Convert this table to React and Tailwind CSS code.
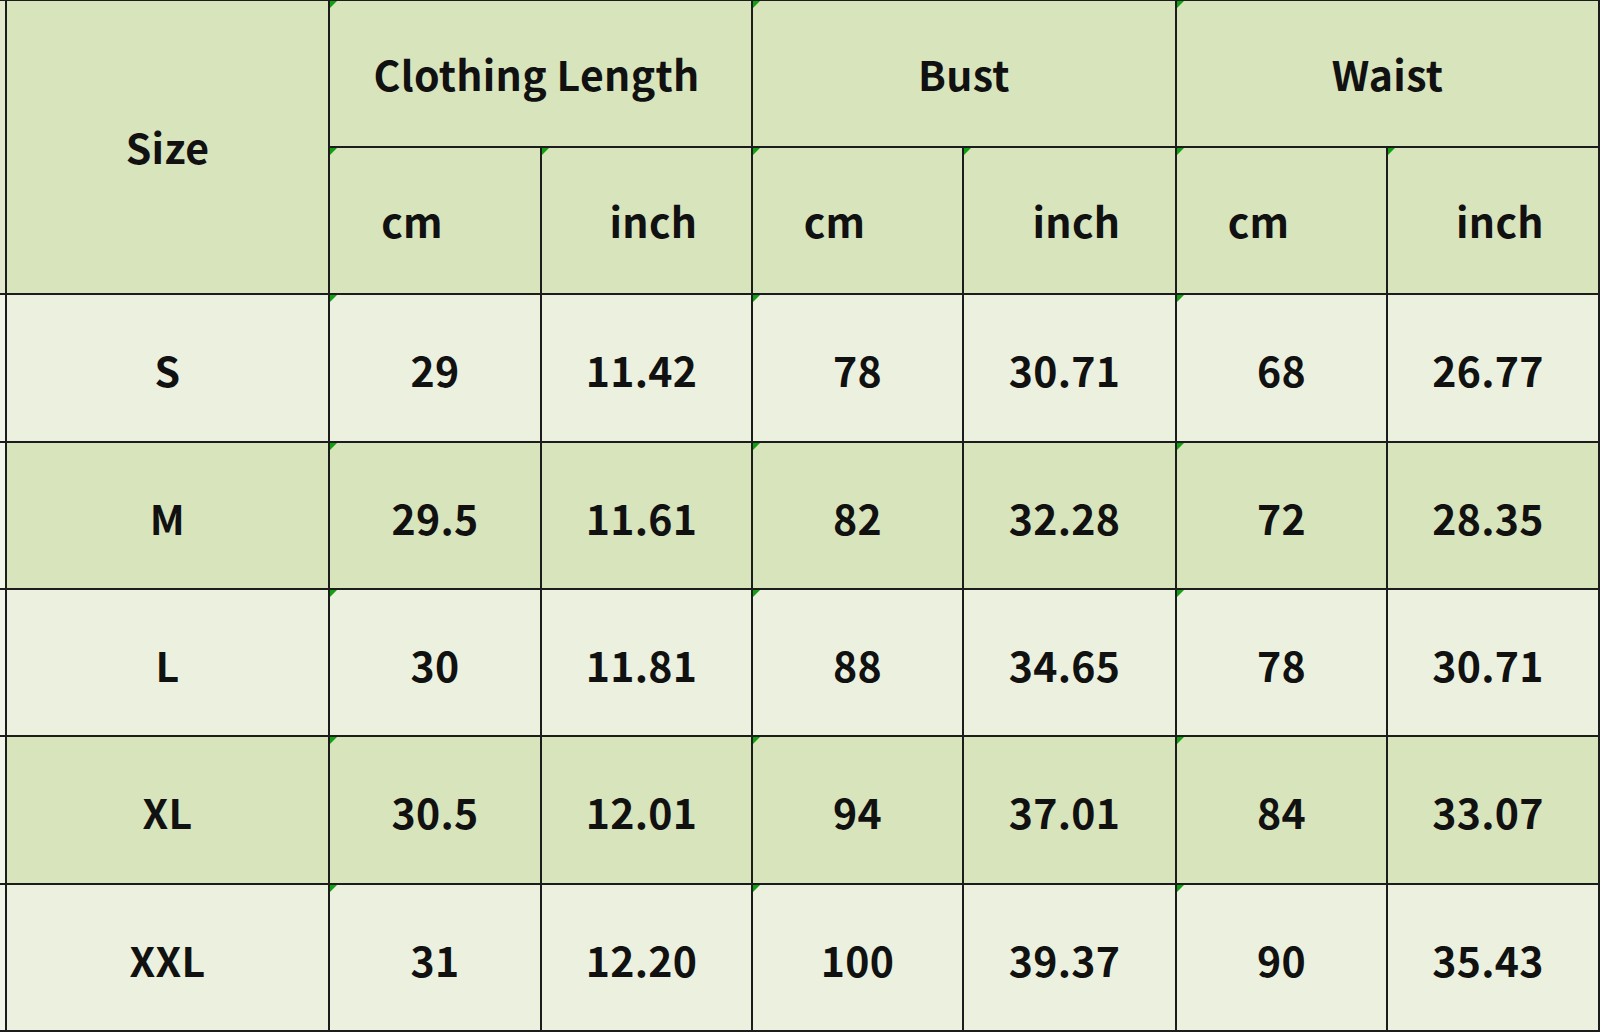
import React from "react";

const rows = [
  ["S", "29", "11.42", "78", "30.71", "68", "26.77"],
  ["M", "29.5", "11.61", "82", "32.28", "72", "28.35"],
  ["L", "30", "11.81", "88", "34.65", "78", "30.71"],
  ["XL", "30.5", "12.01", "94", "37.01", "84", "33.07"],
  ["XXL", "31", "12.20", "100", "39.37", "90", "35.43"],
];

const Flag = () => (
  <span className="absolute left-0 top-0 h-0 w-0 border-t-[7px] border-r-[7px] border-t-[#12a012] border-r-transparent" />
);

const Cell = ({ children, className = "", flag = false }) => (
  <div className={`relative flex items-center justify-center ${className}`}>
    {flag && <Flag />}
    {children}
  </div>
);

export default function App() {
  return (
    <div
      className="h-[1034px] w-[1600px] bg-white text-[41px] font-semibold tracking-[0.3px] text-[#111] overflow-hidden"
      style={{ fontFamily: '"Noto Sans CJK SC", "Noto Sans", sans-serif' }}
    >
      <div className="grid grid-cols-[5px_321px_210px_209px_209px_211px_209px_210px] grid-rows-[145px_145px_146px_145px_145px_146px_145px] gap-[2px] border-t border-r-2 border-b-2 border-[#1c1c1c] bg-[#1c1c1c]">
        <div className="row-span-2 bg-[#e2e9cd]" />
        <Cell className="row-span-2 bg-[#d8e4bc]">Size</Cell>
        <Cell className="col-span-2 bg-[#d8e4bc] pr-[8px]" flag>Clothing Length</Cell>
        <Cell className="col-span-2 bg-[#d8e4bc]" flag>Bust</Cell>
        <Cell className="col-span-2 bg-[#d8e4bc]" flag>Waist</Cell>
        {["cm", "inch", "cm", "inch", "cm", "inch"].map((u, i) => (
          <Cell
            key={i}
            flag
            className={`bg-[#d8e4bc] ${u === "cm" ? "pr-[46px]" : "pl-[14px]"}`}
          >
            {u}
          </Cell>
        ))}
        {rows.map((r, ri) => {
          const bg = ri % 2 === 0 ? "bg-[#ebf1de]" : "bg-[#d8e4bc]";
          return (
            <React.Fragment key={r[0]}>
              <div className="bg-[#f2f5e9]" />
              <Cell className={`${bg} pt-[4px]`}>{r[0]}</Cell>
              {r.slice(1).map((v, vi) => (
                <Cell
                  key={vi}
                  className={`${bg} pt-[4px] ${vi % 2 === 1 ? "pr-[10px]" : ""}`}
                  flag={vi % 2 === 0}
                >
                  {v}
                </Cell>
              ))}
            </React.Fragment>
          );
        })}
      </div>
    </div>
  );
}
